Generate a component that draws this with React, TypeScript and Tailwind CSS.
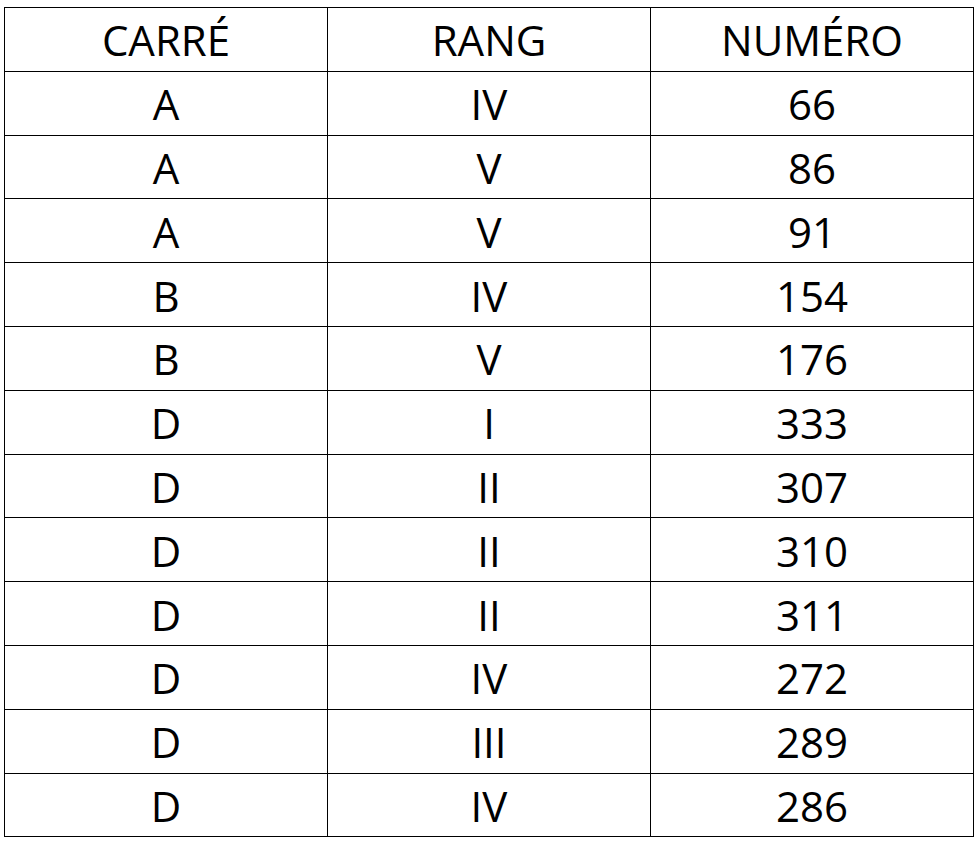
const rows: [string, string, string][] = [
  ["A", "IV", "66"],
  ["A", "V", "86"],
  ["A", "V", "91"],
  ["B", "IV", "154"],
  ["B", "V", "176"],
  ["D", "I", "333"],
  ["D", "II", "307"],
  ["D", "II", "310"],
  ["D", "II", "311"],
  ["D", "IV", "272"],
  ["D", "III", "289"],
  ["D", "IV", "286"],
];

export default function App() {
  return (
    <div className="w-[978px] h-[841px] bg-white pt-[7px] pl-[4px]">
      <table
        className="border-collapse w-[970px] table-fixed text-black text-[42px] leading-none"
        style={{ fontFamily: '"Open Sans", "Noto Sans", sans-serif' }}
      >
        <thead>
          <tr className="h-[63.8px]">
            <th className="border border-black font-normal text-center align-middle p-0 pt-[2px]">CARRÉ</th>
            <th className="border border-black font-normal text-center align-middle p-0 pt-[2px]">RANG</th>
            <th className="border border-black font-normal text-center align-middle p-0 pt-[2px]">NUMÉRO</th>
          </tr>
        </thead>
        <tbody>
          {rows.map((r, i) => (
            <tr key={i} className="h-[63.8px]">
              {r.map((c, j) => (
                <td key={j} className="border border-black text-center align-middle p-0 pt-[2px]">
                  {c}
                </td>
              ))}
            </tr>
          ))}
        </tbody>
      </table>
    </div>
  );
}
